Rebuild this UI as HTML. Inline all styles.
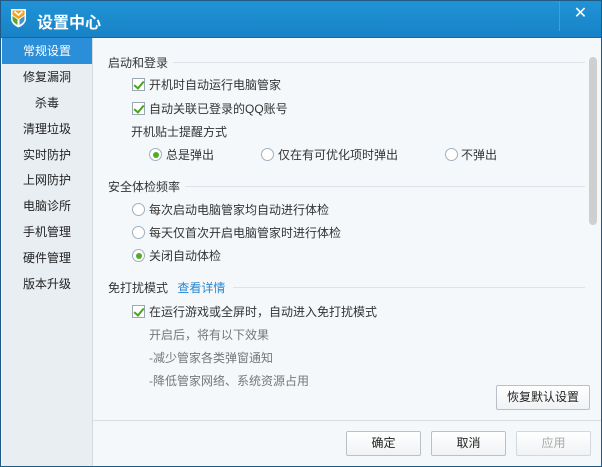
<!DOCTYPE html>
<html><head><meta charset="utf-8"><style>
*{margin:0;padding:0;box-sizing:border-box}
body{width:602px;height:467px;overflow:hidden;background:#fff;font-family:"Liberation Sans","Noto Sans CJK SC",sans-serif;font-size:12px;color:#333}
.win{position:absolute;left:0;top:0;width:602px;height:467px;border:1px solid #1d5a85;background:#f4f8fb}
.title{position:absolute;left:0;top:0;width:600px;height:37px;background:linear-gradient(#2093d6,#1783c6);border-bottom:1px solid #0f6aa5}
.title .t{position:absolute;left:36px;top:8px;color:#fff;font-size:16px;font-weight:bold}
.close{position:absolute;left:558px;top:0;width:42px;height:30px;border-left:1px solid #3aa0de;color:#fff;font-size:16px;text-align:center;line-height:26px}
.side{position:absolute;left:1px;top:37px;width:91px;height:428px;background:#e9eef3;border-right:1px solid #d4d9de}
.side div{height:25.9px;line-height:26px;text-align:center;color:#222;font-size:12px}
.side .on{background:#2a8fd8;color:#fff}
.a{position:absolute;white-space:nowrap;line-height:14px}
.hline{position:absolute;height:1px;background:#dde3e8}
.cb{position:absolute;width:13px;height:13px;border:1px solid #9aa8b5;background:#fff}
.cb:after{content:"";position:absolute;left:3px;top:0px;width:4px;height:8px;border:solid #4aa31d;border-width:0 2px 2px 0;transform:rotate(40deg)}
.rd{position:absolute;width:13px;height:13px;border:1px solid #9fb0c0;border-radius:50%;background:#fff}
.rd.on:after{content:"";position:absolute;left:2.5px;top:2.5px;width:6px;height:6px;border-radius:50%;background:#4fae25}
.g{color:#777}
.btn{position:absolute;height:25px;border:1px solid #b9c0c7;background:linear-gradient(#fff,#f0f2f4);border-radius:2px;text-align:center;line-height:23px;color:#222}
</style></head><body>
<div class="win">
<div class="title">
<svg style="position:absolute;left:9px;top:7px" width="17" height="20" viewBox="0 0 17 20"><path d="M1 1H16V11C16 15 12 18 8.5 19.5C5 18 1 15 1 11Z" fill="#fff"/><path d="M2.5 2.5H14.5V7L8.5 11L2.5 7Z" fill="#f3a21c"/><path d="M2.5 8L7.5 11.5V17C5 15.5 2.5 13.5 2.5 11Z" fill="#5aa72a"/><path d="M14.5 8L9.5 11.5V17C12 15.5 14.5 13.5 14.5 11Z" fill="#4a8fcf"/><path d="M4.5 3.5L8.5 7L12.5 3.5" fill="none" stroke="#fff" stroke-width="1.6"/></svg>
<div class="t">设置中心</div><div class="close">✕</div></div>
<div class="side">
<div class="on">常规设置</div><div>修复漏洞</div><div>杀毒</div><div>清理垃圾</div><div>实时防护</div><div>上网防护</div><div>电脑诊所</div><div>手机管理</div><div>硬件管理</div><div>版本升级</div>
</div>
<div class="a" style="left:107px;top:55px">启动和登录</div><div class="hline" style="left:172px;top:61px;width:412px"></div>
<div class="cb" style="left:131px;top:77px"></div><div class="a" style="left:148px;top:77px">开机时自动运行电脑管家</div>
<div class="cb" style="left:131px;top:101px"></div><div class="a" style="left:148px;top:101px">自动关联已登录的QQ账号</div>
<div class="a" style="left:130px;top:124px">开机贴士提醒方式</div>
<div class="rd on" style="left:148px;top:147px"></div><div class="a" style="left:165px;top:147px">总是弹出</div>
<div class="rd" style="left:260px;top:147px"></div><div class="a" style="left:277px;top:147px">仅在有可优化项时弹出</div>
<div class="rd" style="left:444px;top:147px"></div><div class="a" style="left:460px;top:147px">不弹出</div>
<div class="a" style="left:107px;top:179px">安全体检频率</div><div class="hline" style="left:184px;top:185px;width:400px"></div>
<div class="rd" style="left:131px;top:202px"></div><div class="a" style="left:148px;top:202px">每次启动电脑管家均自动进行体检</div>
<div class="rd" style="left:131px;top:225px"></div><div class="a" style="left:148px;top:225px">每天仅首次开启电脑管家时进行体检</div>
<div class="rd on" style="left:131px;top:248px"></div><div class="a" style="left:148px;top:248px">关闭自动体检</div>
<div class="a" style="left:107px;top:280px">免打扰模式 <span style="color:#2a87d0;margin-left:6px">查看详情</span></div><div class="hline" style="left:232px;top:286px;width:352px"></div>
<div class="cb" style="left:131px;top:304px"></div><div class="a" style="left:148px;top:304px">在运行游戏或全屏时，自动进入免打扰模式</div>
<div class="a g" style="left:148px;top:327px">开启后，将有以下效果</div>
<div class="a g" style="left:148px;top:350px">-减少管家各类弹窗通知</div>
<div class="a g" style="left:148px;top:373px">-降低管家网络、系统资源占用</div>
<div style="position:absolute;left:588px;top:56px;width:8px;height:168px;background:#cfcfcf;border-radius:4px"></div>
<div class="btn" style="left:495px;top:384px;width:94px">恢复默认设置</div>
<div class="hline" style="left:92px;top:419px;width:508px;background:#d8dde2"></div>
<div class="btn" style="left:345px;top:430px;width:75px">确定</div>
<div class="btn" style="left:430px;top:430px;width:75px">取消</div>
<div class="btn" style="left:515px;top:430px;width:75px;color:#aaa;border-color:#d3d8dc">应用</div>
</div>
</body></html>
